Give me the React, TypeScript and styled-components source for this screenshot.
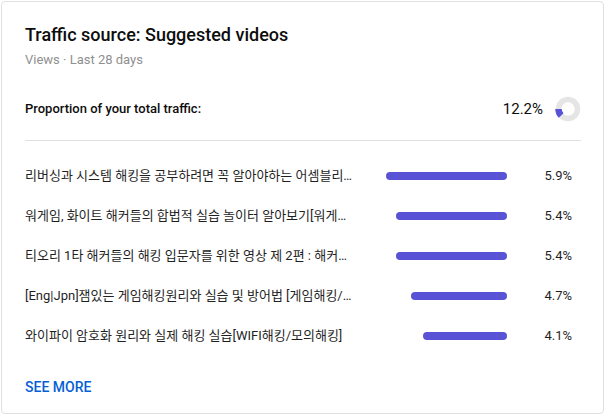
import React from "react";
import styled, { createGlobalStyle } from "styled-components";

const Global = createGlobalStyle`
  html, body { margin: 0; padding: 0; background: #ffffff; }
  body {
    font-family: Roboto, "Noto Sans CJK KR", "Noto Sans", sans-serif;
    -webkit-font-smoothing: antialiased;
  }
  #root { padding: 1px; }
`;

const Card = styled.section`
  box-sizing: border-box;
  width: 603px;
  height: 413px;
  border: 1px solid #e0e0e0;
  border-radius: 4px;
  padding: 21px 22px 0 23px;
  display: flex;
  flex-direction: column;
  background: #ffffff;
`;

const Title = styled.h2`
  margin: 0;
  font-size: 18px;
  line-height: 24px;
  font-weight: 500;
  color: #0d0d0d;
`;

const Subtitle = styled.div`
  margin-top: 4px;
  font-size: 13px;
  line-height: 18px;
  color: #909090;
`;

const ProportionRow = styled.div`
  margin-top: 24px;
  height: 32px;
  display: flex;
  align-items: center;
  justify-content: space-between;
`;

const ProportionLabel = styled.div`
  font-size: 13px;
  line-height: 18px;
  font-weight: 500;
  color: #0d0d0d;
`;

const ProportionValue = styled.div`
  display: flex;
  align-items: center;
  gap: 12px;
`;

const BigValue = styled.span`
  font-size: 15px;
  line-height: 20px;
  color: #0d0d0d;
`;

const Divider = styled.hr`
  margin: 15px 0 0 0;
  border: none;
  height: 1px;
  background: #e0e0e0;
`;

const List = styled.div`
  margin-top: 15px;
  display: flex;
  flex-direction: column;
`;

const Row = styled.div`
  display: grid;
  grid-template-columns: 331px 1fr 65px;
  align-items: center;
  height: 40px;
  padding-right: 9px;
`;

const VideoTitle = styled.div`
  font-size: 13px;
  line-height: 18px;
  color: #1f1f1f;
  white-space: nowrap;
  overflow: hidden;
  text-overflow: ellipsis;
`;

const BarCell = styled.div`
  display: flex;
  justify-content: flex-end;
`;

const Bar = styled.div`
  height: 8px;
  border-radius: 4px;
  background: #5a52d4;
`;

const Pct = styled.div`
  text-align: right;
  font-size: 13px;
  line-height: 18px;
  color: #1f1f1f;
`;

const SeeMore = styled.button`
  margin-top: 21px;
  align-self: flex-start;
  background: none;
  border: none;
  padding: 0;
  font-family: inherit;
  font-size: 14px;
  line-height: 20px;
  font-weight: 500;
  color: #065fd4;
  text-transform: uppercase;
  cursor: pointer;
`;

const Donut: React.FC<{ value: number }> = ({ value }) => {
  const cx = 13;
  const cy = 13;
  const r = 9.5;
  const a1 = Math.PI;
  const a0 = Math.PI - (value / 100) * Math.PI * 2;
  const x0 = cx + r * Math.cos(a0);
  const y0 = cy + r * Math.sin(a0);
  const x1 = cx + r * Math.cos(a1);
  const y1 = cy + r * Math.sin(a1);
  return (
    <svg width="26" height="26" viewBox="0 0 26 26">
      <circle cx={cx} cy={cy} r={r} fill="none" stroke="#e5e5e5" strokeWidth="5.5" />
      <path
        d={`M ${x0} ${y0} A ${r} ${r} 0 0 1 ${x1} ${y1}`}
        fill="none"
        stroke="#5a52d4"
        strokeWidth="6.5"
      />
    </svg>
  );
};

const rows = [
  { title: "리버싱과 시스템 해킹을 공부하려면 꼭 알아야하는 어셈블리어 기초 [리버싱/시스템해킹]", pct: 5.9 },
  { title: "워게임, 화이트 해커들의 합법적 실습 놀이터 알아보기[워게임/해킹실습]", pct: 5.4 },
  { title: "티오리 1타 해커들의 해킹 입문자를 위한 영상 제 2편 : 해커가 되는 방법", pct: 5.4 },
  { title: "[Eng|Jpn]잼있는 게임해킹원리와 실습 및 방어법 [게임해킹/치트엔진]", pct: 4.7 },
  { title: "와이파이 암호화 원리와 실제 해킹 실습[WIFI해킹/모의해킹]", pct: 4.1 },
];

export default function App() {
  return (
    <>
      <Global />
      <Card>
        <Title>Traffic source: Suggested videos</Title>
        <Subtitle>Views · Last 28 days</Subtitle>
        <ProportionRow>
          <ProportionLabel>Proportion of your total traffic:</ProportionLabel>
          <ProportionValue>
            <BigValue>12.2%</BigValue>
            <Donut value={12.2} />
          </ProportionValue>
        </ProportionRow>
        <Divider />
        <List>
          {rows.map((r) => (
            <Row key={r.title}>
              <VideoTitle>{r.title}</VideoTitle>
              <BarCell>
                <Bar style={{ width: `${r.pct * 20.5}px` }} />
              </BarCell>
              <Pct>{r.pct}%</Pct>
            </Row>
          ))}
        </List>
        <SeeMore>See more</SeeMore>
      </Card>
    </>
  );
}
